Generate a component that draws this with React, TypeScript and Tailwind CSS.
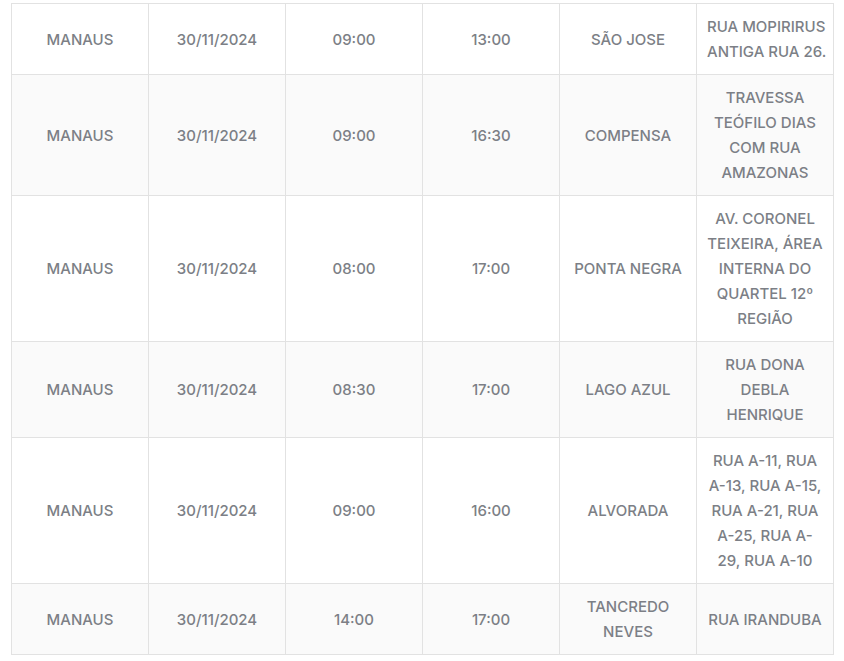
const rows: { time1: string; time2: string; bairro: string[]; local: string[] }[] = [
  { time1: "09:00", time2: "13:00", bairro: ["SÃO JOSE"], local: ["RUA MOPIRIRUS", "ANTIGA RUA 26."] },
  { time1: "09:00", time2: "16:30", bairro: ["COMPENSA"], local: ["TRAVESSA", "TEÓFILO DIAS", "COM RUA", "AMAZONAS"] },
  {
    time1: "08:00",
    time2: "17:00",
    bairro: ["PONTA NEGRA"],
    local: ["AV. CORONEL", "TEIXEIRA, ÁREA", "INTERNA DO", "QUARTEL 12º", "REGIÃO"],
  },
  { time1: "08:30", time2: "17:00", bairro: ["LAGO AZUL"], local: ["RUA DONA", "DEBLA", "HENRIQUE"] },
  {
    time1: "09:00",
    time2: "16:00",
    bairro: ["ALVORADA"],
    local: ["RUA A-11, RUA", "A-13, RUA A-15,", "RUA A-21, RUA", "A-25, RUA A-", "29, RUA A-10"],
  },
  { time1: "14:00", time2: "17:00", bairro: ["TANCREDO", "NEVES"], local: ["RUA IRANDUBA"] },
];

function Lines({ lines }: { lines: string[] }) {
  return (
    <>
      {lines.map((l, i) => (
        <div key={i} className="whitespace-nowrap">
          {l}
        </div>
      ))}
    </>
  );
}

export default function App() {
  const cell = "border border-[#e2e2e2] px-[10px] py-[10px] text-center align-middle";
  return (
    <div className="w-[844px] h-[661px] bg-white overflow-hidden pt-[3px] pl-[11px]">
      <table
        className="table-fixed w-[823px] border-collapse text-[15px] leading-[25px] font-medium text-[#7c7f86]"
        style={{ fontFamily: "Inter, 'Noto Sans', sans-serif" }}
      >
        <tbody>
          {rows.map((r, i) => (
            <tr key={i} className={i % 2 === 0 ? "bg-white" : "bg-[#fafafa]"}>
              <td className={cell}>MANAUS</td>
              <td className={cell}>30/11/2024</td>
              <td className={cell}>{r.time1}</td>
              <td className={cell}>{r.time2}</td>
              <td className={cell}>
                <Lines lines={r.bairro} />
              </td>
              <td className={cell}>
                <Lines lines={r.local} />
              </td>
            </tr>
          ))}
        </tbody>
      </table>
    </div>
  );
}
